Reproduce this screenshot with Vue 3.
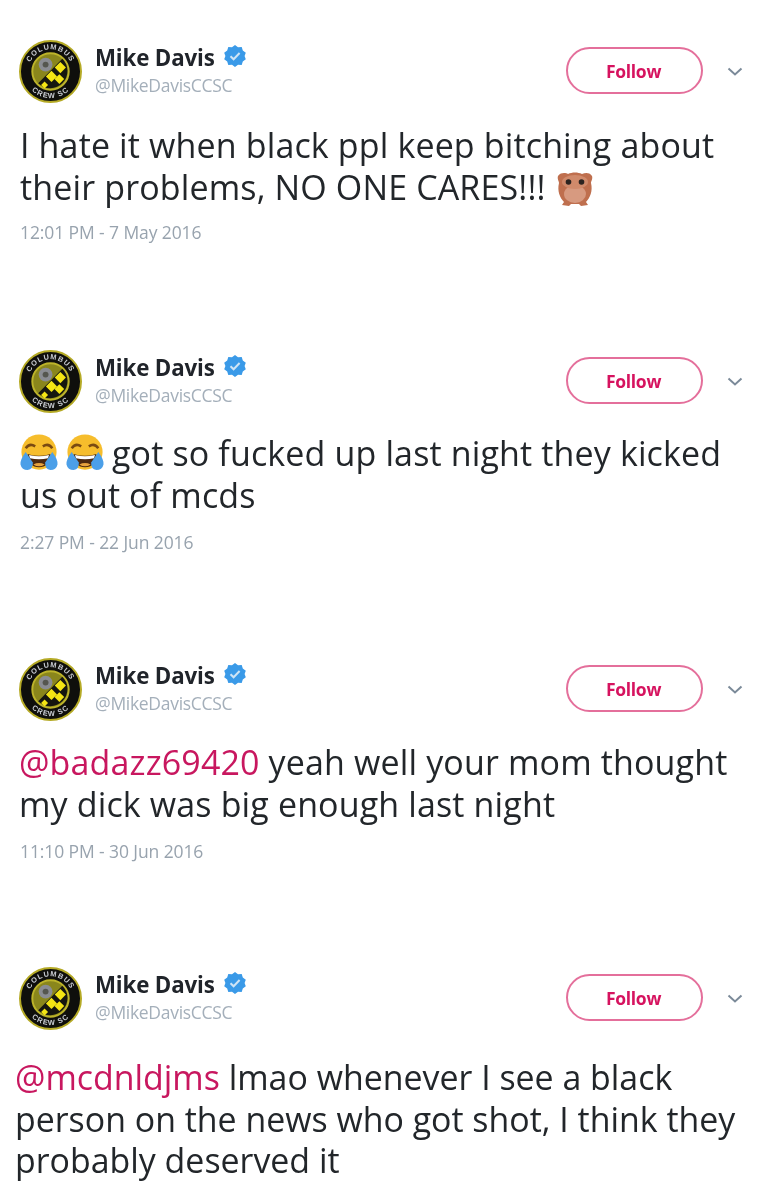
<script setup>
const tweets = [
  { id: 1, date: '12:01 PM - 7 May 2016', cls: 't1', lines: [[{ t: 'I hate it when black ppl keep bitching about' }], [{ t: 'their problems, NO ONE CARES!!! ' }, { e: 'owl' }]] },
  { id: 2, date: '2:27 PM - 22 Jun 2016', cls: 't2', lines: [[{ e: 'joy' }, { e: 'joy' }, { t: 'got so fucked up last night they kicked' }], [{ t: 'us out of mcds' }]] },
  { id: 3, date: '11:10 PM - 30 Jun 2016', cls: 't3', lines: [[{ m: '@badazz69420' }, { t: ' yeah well your mom thought' }], [{ t: 'my dick was big enough last night' }]] },
  { id: 4, date: '', cls: 't4', lines: [[{ m: '@mcdnldjms' }, { t: ' lmao whenever I see a black' }], [{ t: 'person on the news who got shot, I think they' }], [{ t: 'probably deserved it' }]] }
]
</script>

<template>
  <main class="page">
    <article v-for="tw in tweets" :key="tw.id" class="tweet" :class="tw.cls">
      <header class="head">
        <svg class="avatar" viewBox="0 0 64 64" aria-hidden="true">
          <defs>
            <path :id="`top${tw.id}`" d="M9.500 32a22.500 22.500 0 0 1 45 0" />
            <path :id="`bot${tw.id}`" d="M5 32a27 27 0 0 0 54 0" />
          </defs>
          <circle cx="32" cy="32" r="31" fill="#0f0f0c" stroke="#b5aa26" stroke-width="2" />
          <text class="ring"><textPath :href="`#top${tw.id}`" startOffset="50%" text-anchor="middle">COLUMBUS</textPath></text>
          <text class="ring"><textPath :href="`#bot${tw.id}`" startOffset="50%" text-anchor="middle">CREW SC</textPath></text>
          <circle cx="32" cy="32" r="18.500" fill="#8a861c" stroke="#bdb42a" stroke-width="2" />
          <path d="M19.500 44 L44 19 A17.500 17.500 0 0 1 19.500 44 Z" fill="#16160f" />
          <g fill="#f4e514">
            <rect x="38" y="24" width="8" height="8" transform="rotate(45 42 28)" />
            <rect x="29" y="33" width="8" height="8" transform="rotate(45 33 37)" />
            <rect x="38" y="36" width="7" height="7" transform="rotate(45 41 39)" />
            <rect x="24" y="43" width="5" height="5" transform="rotate(45 26 45)" />
          </g>
          <circle cx="27" cy="25" r="7" fill="#8a8c92" />
          <circle cx="27" cy="25" r="3" fill="#55564f" />
        </svg>
        <div class="who">
          <div class="name-row">
            <span class="name">Mike Davis</span>
            <svg class="badge" viewBox="0 0 24 24" aria-hidden="true">
              <path d="M12 1l3 2.200 3.700-.2 1.100 3.500 3 2.200-1.200 3.300 1.200 3.300-3 2.200-1.100 3.500-3.700-.2L12 23l-3-2.200-3.700.2-1.100-3.500-3-2.200L2.400 12 1.200 8.700l3-2.200L5.300 3 9 3.200z" fill="#3a9ae8" />
              <path d="M7.500 12.200l3.100 3.100 6-6.300" fill="none" stroke="#cfe4f5" stroke-width="2" />
            </svg>
          </div>
          <div class="handle">@MikeDavisCCSC</div>
        </div>
        <button class="follow" type="button">Follow</button>
        <svg class="chev" viewBox="0 0 16 10" aria-hidden="true">
          <path d="M1.500 1.500L8 7.500l6.500-6" fill="none" stroke="#7b8a99" stroke-width="2" />
        </svg>
      </header>
      <div class="body">
        <p v-for="(line, i) in tw.lines" :key="i" class="line">
          <template v-for="(p, j) in line" :key="j">
            <span v-if="p.t">{{ p.t }}</span>
            <span v-else-if="p.m" class="mention">{{ p.m }}</span>
            <svg v-else-if="p.e === 'joy'" class="emoji joy" viewBox="0 0 40 40" aria-hidden="true">
              <circle cx="20" cy="19" r="18.500" fill="#f6bd2c" />
              <path d="M6 15q4-6 10-2M34 15q-4-6-10-2" fill="none" stroke="#7a4a12" stroke-width="2.600" />
              <path d="M8 21q12 4 24 0q-1 14-12 14t-12-14z" fill="#4d2a10" />
              <path d="M9.500 22q10.500 3 21 0l-1 3.500q-9.500 2-19 0z" fill="#fff" />
              <path d="M14 32q6-3 12 0q-6 4-12 0z" fill="#e8a33d" />
              <path d="M6 19q-6 8-5.500 13q1.500 6 7.500 6q6-1 5.500-8z" fill="#4b9fe8" />
              <path d="M34 19q6 8 5.500 13q-1.500 6-7.500 6q-6-1-5.500-8z" fill="#4b9fe8" />
            </svg>
            <svg v-else class="emoji owl" viewBox="0 0 40 40" aria-hidden="true">
              <path d="M3 9c3-4 8-3 10-2 4-2 10-2 14 0 3-1 7-2 10 2 1 3-1 5-1 7 2 8-1 15-5 19l2 3-7 1-2-2h-8l-2 2-7-1 2-3c-4-4-7-11-5-19 0-2-2-4-1-7z" fill="#bf6f4e" />
              <ellipse cx="20" cy="27" rx="11" ry="9" fill="#d79a80" />
              <ellipse cx="20" cy="15" rx="13" ry="7" fill="#d08a6b" />
              <circle cx="13.500" cy="15" r="2.800" fill="#2b2320" />
              <circle cx="26.500" cy="15" r="2.800" fill="#2b2320" />
            </svg>
          </template>
        </p>
      </div>
      <time v-if="tw.date" class="date">{{ tw.date }}</time>
    </article>
  </main>
</template>

<style>
html, body { background: #fff; }
</style>

<style scoped>
.page {
  width: 761px;
  height: 1188px;
  overflow: hidden;
  background: #fff;
  font-family: "Open Sans", "Noto Sans", sans-serif;
  color: #22262a;
  padding-top: 40px;
  box-sizing: border-box;
  filter: blur(0.55px);
}
.tweet { height: 310px; box-sizing: border-box; }
.t2 { height: 308px; }
.t3 { height: 309px; }
.head {
  display: flex;
  align-items: flex-start;
  padding-left: 19px;
  height: 64px;
}
.avatar { width: 63px; height: 63px; flex: none; }
.ring { font: 700 7.500px "Liberation Sans", sans-serif; fill: #c9ccd2; letter-spacing: 1px; }
.who { width: 470px; padding-left: 13px; box-sizing: border-box; padding-top: 2px; flex: none; }
.name-row { display: flex; align-items: center; height: 30px; }
.name { font-size: 22.300px; font-weight: 700; color: #20242a; letter-spacing: -0.15px; }
.badge { width: 24px; height: 24px; margin-left: 8px; margin-top: -2px; }
.handle { font-size: 17.500px; color: #a4afba; margin-top: 3px; letter-spacing: -0.3px; line-height: 20px; }
.follow {
  width: 137px;
  height: 47px;
  margin-top: 7px;
  margin-left: 14px;
  border: 2px solid #e46f9b;
  border-radius: 24px;
  background: #fff;
  color: #d6135f;
  font: 700 17.500px "Open Sans", sans-serif;
  letter-spacing: -0.3px;
  padding: 0 2px 0 0;
  flex: none;
}
.chev { width: 16px; height: 10px; margin-top: 27px; margin-left: 24px; flex: none; }
.body { padding-left: 20px; margin-top: 20px; }
.t2 .body { margin-top: 18px; }
.t3 .body { padding-left: 19px; margin-top: 19px; }
.t4 .body { padding-left: 15px; margin-top: 26px; }
.line {
  margin: 0;
  font-size: 34px;
  letter-spacing: 0.14px;
  line-height: 42px;
  display: flex;
  align-items: center;
  white-space: pre;
}
.t4 .line { line-height: 41.500px; font-size: 33.900px; letter-spacing: 0; }
.mention { color: #c8175f; }
.emoji { flex: none; display: block; }
.joy { width: 38px; height: 38px; margin-right: 8px; }
.owl { width: 40px; height: 40px; }
.date { display: block; padding-left: 20px; margin-top: 13px; font-size: 17.500px; line-height: 22px; color: #98a3ae; letter-spacing: -0.1px; }
.t2 .date, .t3 .date { margin-top: 15px; }
</style>
